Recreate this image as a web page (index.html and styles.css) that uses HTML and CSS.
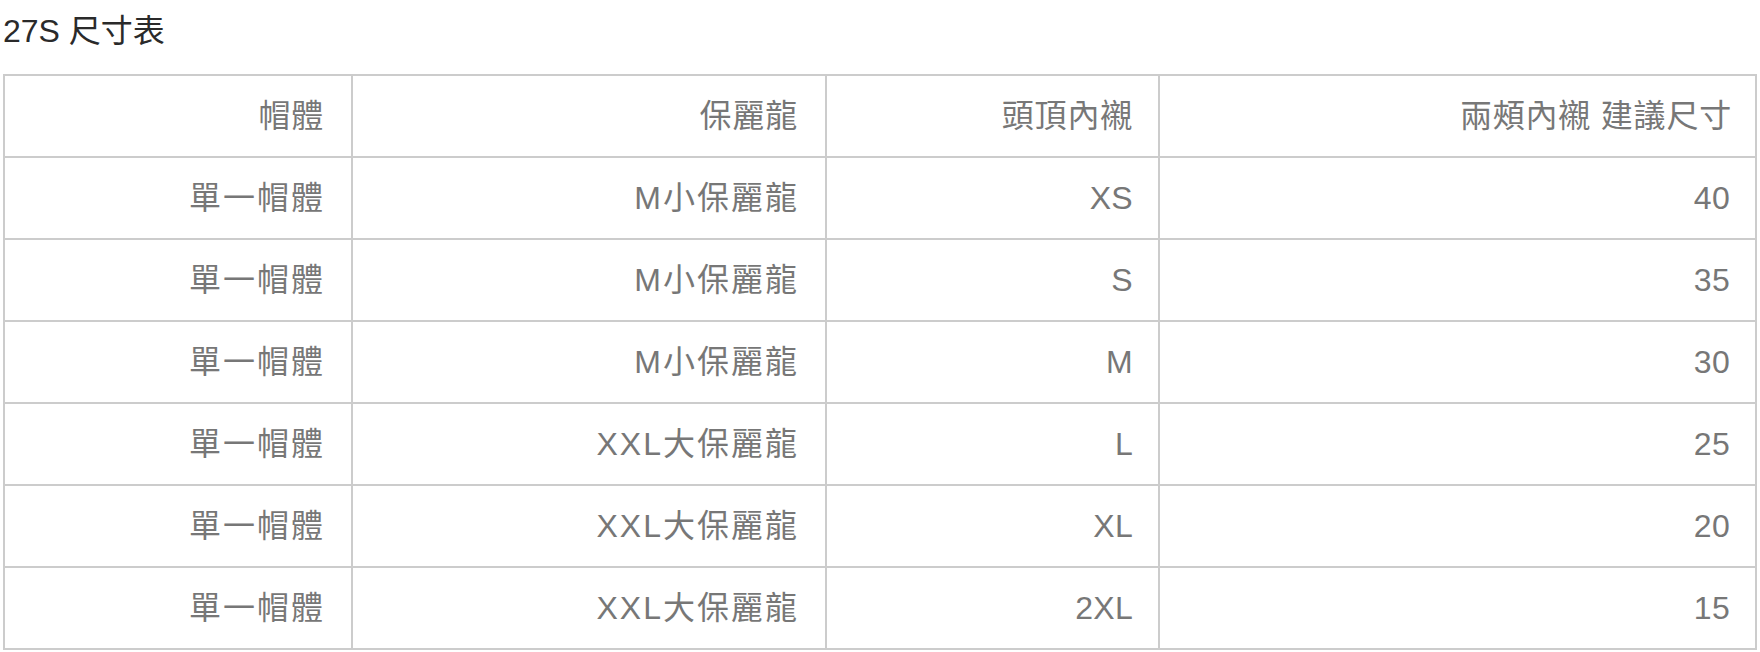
FILE: index.html
```html
<!DOCTYPE html>
<html lang="zh-Hant">
<head>
<meta charset="utf-8">
<title>27S 尺寸表</title>
<link rel="stylesheet" href="styles.css">
</head>
<body>
<div class="page">
  <h2 class="title">27S 尺寸表</h2>
  <table class="size-table">
    <colgroup>
      <col class="c1"><col class="c2"><col class="c3"><col class="c4">
    </colgroup>
    <thead>
      <tr><th>帽體</th><th>保麗龍</th><th>頭頂內襯</th><th>兩頰內襯 建議尺寸</th></tr>
    </thead>
    <tbody>
      <tr><td>單一帽體</td><td>M小保麗龍</td><td>XS</td><td>40</td></tr>
      <tr><td>單一帽體</td><td>M小保麗龍</td><td>S</td><td>35</td></tr>
      <tr><td>單一帽體</td><td>M小保麗龍</td><td>M</td><td>30</td></tr>
      <tr><td>單一帽體</td><td>XXL大保麗龍</td><td>L</td><td>25</td></tr>
      <tr><td>單一帽體</td><td>XXL大保麗龍</td><td>XL</td><td>20</td></tr>
      <tr><td>單一帽體</td><td>XXL大保麗龍</td><td>2XL</td><td>15</td></tr>
    </tbody>
  </table>
</div>
</body>
</html>
```

FILE: styles.css
```css
html, body {
  margin: 0;
  padding: 0;
  background: #fff;
}

body {
  font-family: "Liberation Sans", "Noto Sans CJK TC", sans-serif;
}

.page {
  padding: 0 3px;
}

.title {
  margin: 0 0 19px;
  padding-top: 7px;
  font-size: 32px;
  line-height: 48px;
  font-weight: normal;
  color: #2a2a2a;
}

.size-table {
  width: 100%;
  border-collapse: collapse;
  table-layout: fixed;
}

.c1 { width: 348px; }
.c2 { width: 474px; }
.c3 { width: 333px; }
.c4 { width: auto; }

.size-table th,
.size-table td {
  border: 2px solid #cccccc;
  height: 82px;
  box-sizing: border-box;
  text-align: right;
  vertical-align: middle;
  font-size: 32px;
  line-height: 1;
  font-weight: normal;
  color: #777;
}

.size-table th {
  padding: 0 27px 0 28px;
  letter-spacing: 0.8px;
}

.size-table th:nth-child(3) {
  padding-right: 25px;
}

.size-table th:last-child {
  padding-right: 23px;
}

.size-table td {
  padding: 0 26px 0 28px;
  letter-spacing: 2px;
}

.size-table td:nth-child(n+3) {
  letter-spacing: 0.3px;
  padding-right: 25px;
}
```
